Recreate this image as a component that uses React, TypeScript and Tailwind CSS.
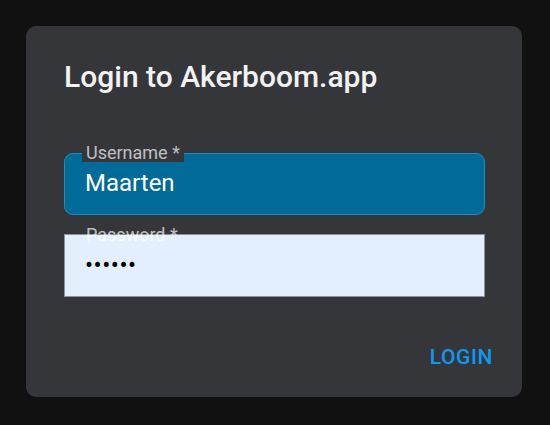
import React from "react";

export default function App() {
  return (
    <div className="w-[550px] h-[425px] bg-[#111112] p-[26px] font-['Roboto',sans-serif]">
      <div className="w-[496px] h-[371px] bg-[#35363a] rounded-[10px] flex flex-col pl-[38px] pr-[37px]">
        <h1 className="mt-[33px] text-[30px] leading-[36px] font-medium text-[#f2f2f3]">
          Login to Akerboom.app
        </h1>

        <div className="mt-[58px] relative h-[62px] w-[421px] rounded-[9px] bg-[#006a99] border border-[#1e8ec0] flex items-center pl-[20px]">
          <span className="text-[24px] leading-[28px] text-white -mt-[3px]">Maarten</span>
          <span className="absolute left-[17px] top-[-10px] px-[4px] bg-[#35363a] text-[18px] leading-[18px] text-white/70">
            Username *
          </span>
        </div>

        <div className="mt-[19px] relative h-[63px] w-[421px] bg-[#e3effd] border border-[#8b93a0] flex items-center pl-[20px]">
          <span className="text-[24px] leading-[28px] text-black -mt-[2px] tracking-[0.5px]">••••••</span>
          <span className="absolute left-[21px] top-[-9px] text-[18px] leading-[18px] text-white/70">
            Password *
          </span>
        </div>

        <div className="mt-[48px] flex justify-end">
          <span className="text-[21px] leading-[24px] font-medium tracking-[0.6px] text-[#0c9af4] mr-[-8px]">
            LOGIN
          </span>
        </div>
      </div>
    </div>
  );
}
